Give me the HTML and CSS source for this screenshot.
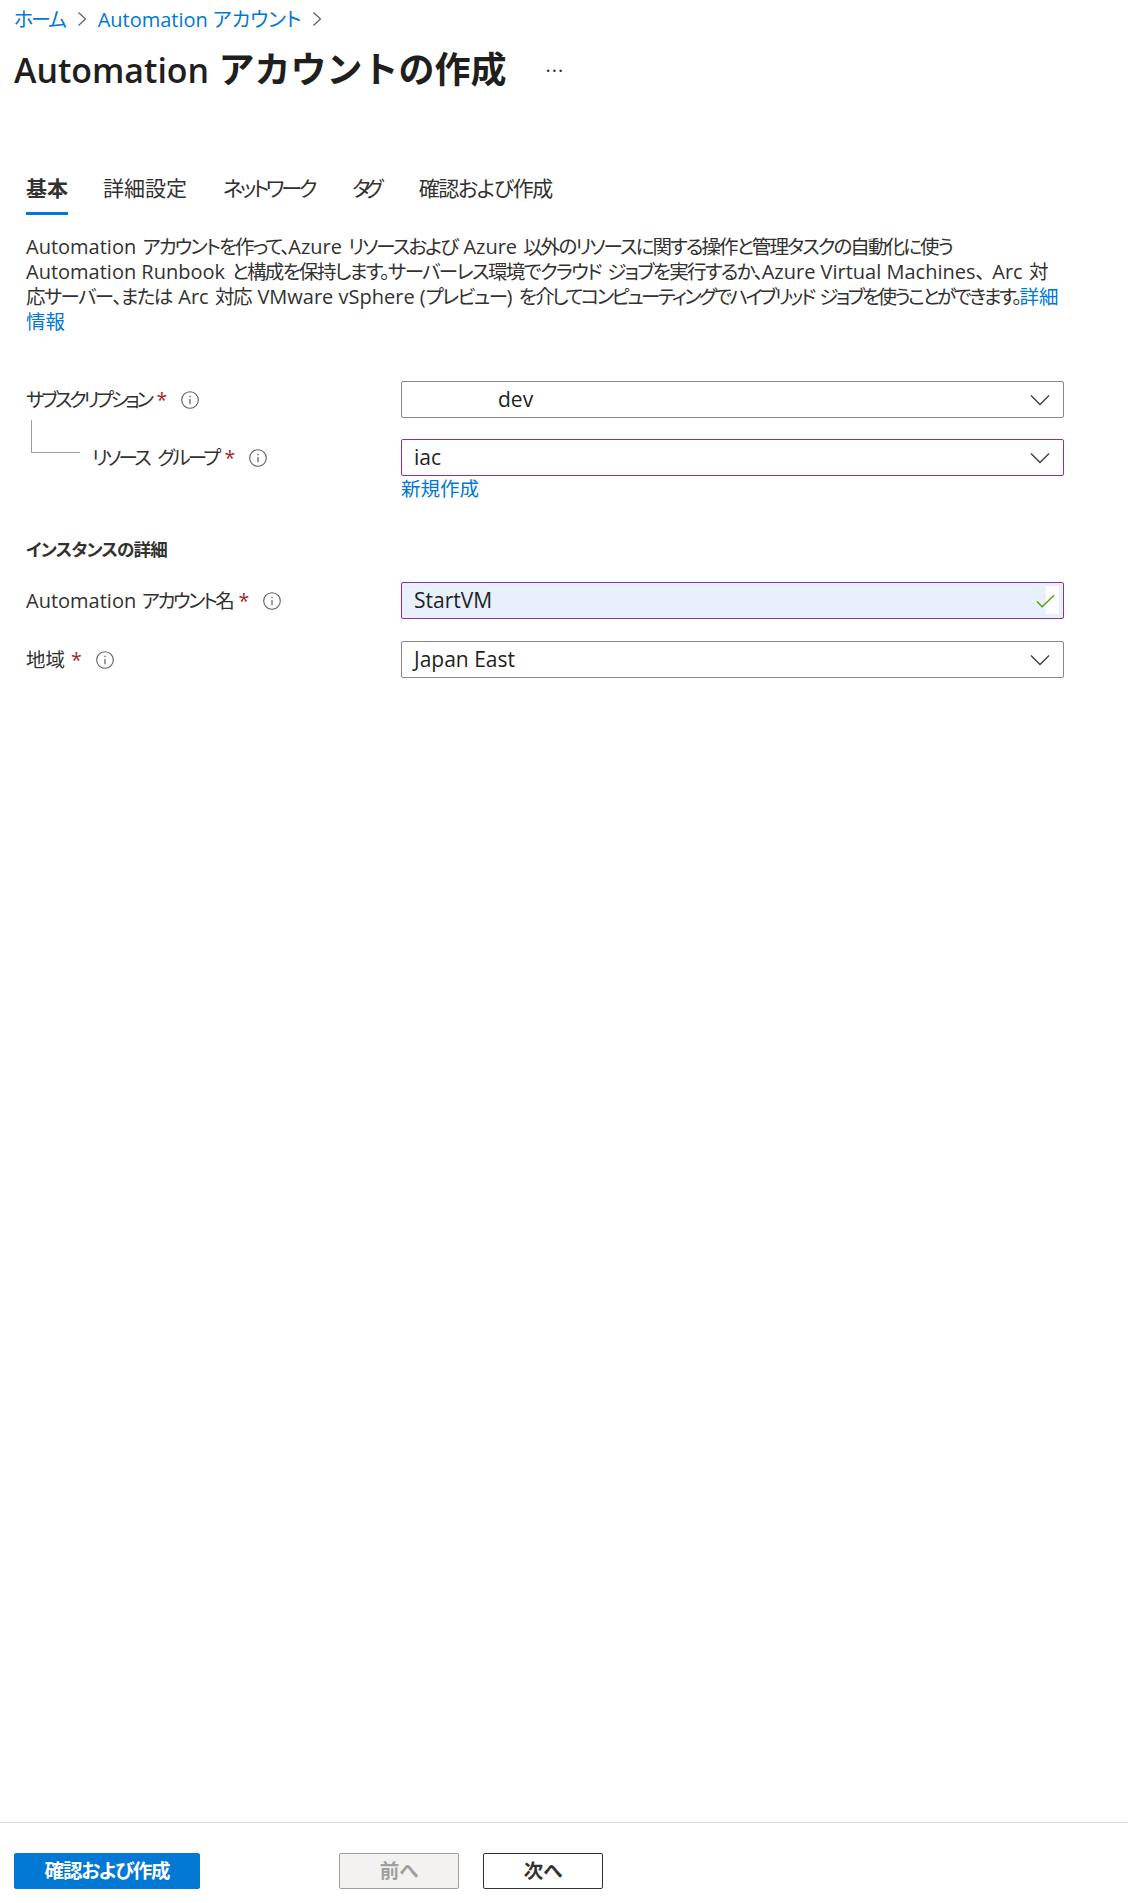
FILE: index.html
```html
<!DOCTYPE html>
<html lang="ja">
<head>
<meta charset="utf-8">
<title>Automation アカウントの作成</title>
<link rel="stylesheet" href="styles.css">
</head>
<body>
<div class="page">
  <nav class="crumbs">
    <a class="crumb-home" href="#">ホーム</a>
    <svg class="crumb-sep" viewBox="0 0 10 16"><path d="M1.5 1.5 8.5 8l-7 6.5"/></svg>
    <a href="#">Automation アカウント</a>
    <svg class="crumb-sep" viewBox="0 0 10 16"><path d="M1.5 1.5 8.5 8l-7 6.5"/></svg>
  </nav>
  <header class="title-row">
    <h1><span class="title-en">Automation</span> アカウントの作成</h1>
    <span class="more">···</span>
  </header>
  <main class="content">
    <div class="tabs">
      <span class="tab active">基本</span>
      <span class="tab">詳細設定</span>
      <span class="tab tab-net">ネットワーク</span>
      <span class="tab tab-tag">タグ</span>
      <span class="tab tab-review">確認および作成</span>
    </div>
    <p class="intro">
      <span class="line line-1"><span class="en">Automation</span> アカウントを作って、<span class="en">Azure</span> リソースおよび <span class="en">Azure</span> 以外のリソースに関する操作と管理タスクの自動化に使う</span>
      <span class="line line-2"><span class="en">Automation Runbook</span> と構成を保持します。サーバーレス環境でクラウド ジョブを実行するか、<span class="en">Azure Virtual Machines</span><span class="comma">、</span><span class="en">Arc</span> 対</span>
      <span class="line line-3">応サーバー、または <span class="en">Arc</span> 対応 <span class="en">VMware vSphere (</span>プレビュー<span class="en">)</span> を<span class="tight">介してコンピューティングでハイブリッド ジョブを使うことができます。</span><a class="en-link" href="#">詳細</a></span>
      <a class="line en-link" href="#">情報</a>
    </p>

    <div class="field first">
      <label class="label label-sub"><span>サブスクリプション</span><span class="req">*</span><svg class="info" viewBox="0 0 18 18"><circle cx="9" cy="9" r="8.3"/><path d="M9 8v5.2M9 4.8v1.4"/></svg></label>
      <div class="control"><span class="value redacted">dev</span><svg class="chev" viewBox="0 0 20 12"><path d="M1 1.5 10 10.5l9-9"/></svg></div>
    </div>
    <div class="field nested">
      <span class="tree"></span>
      <label class="label label-rg"><span>リソース グループ</span><span class="req">*</span><svg class="info" viewBox="0 0 18 18"><circle cx="9" cy="9" r="8.3"/><path d="M9 8v5.2M9 4.8v1.4"/></svg></label>
      <div class="control invalid"><span class="value">iac</span><svg class="chev" viewBox="0 0 20 12"><path d="M1 1.5 10 10.5l9-9"/></svg></div>
    </div>
    <a class="create-new" href="#">新規作成</a>

    <h2>インスタンスの詳細</h2>

    <div class="field">
      <label class="label label-name"><span><span class="en">Automation</span> アカウント名</span><span class="req">*</span><svg class="info" viewBox="0 0 18 18"><circle cx="9" cy="9" r="8.3"/><path d="M9 8v5.2M9 4.8v1.4"/></svg></label>
      <div class="control invalid filled"><span class="value">StartVM</span><span class="check-patch"></span><svg class="check" viewBox="0 0 20 14"><path d="M1 7.5 6.5 13 19 1"/></svg></div>
    </div>
    <div class="field region">
      <label class="label"><span>地域</span><span class="req">*</span><svg class="info" viewBox="0 0 18 18"><circle cx="9" cy="9" r="8.3"/><path d="M9 8v5.2M9 4.8v1.4"/></svg></label>
      <div class="control"><span class="value">Japan East</span><svg class="chev" viewBox="0 0 20 12"><path d="M1 1.5 10 10.5l9-9"/></svg></div>
    </div>
  </main>
  <footer class="footer">
    <button class="btn primary" type="button">確認および作成</button>
    <button class="btn disabled" type="button">前へ</button>
    <button class="btn outline" type="button">次へ</button>
  </footer>
</div>
</body>
</html>
```

FILE: styles.css
```css
* { box-sizing: border-box; }
html, body { margin: 0; padding: 0; background: #fff; }
body {
  font-family: "Open Sans", "Noto Sans CJK JP", sans-serif;
  font-feature-settings: "palt";
  color: #323130;
  font-size: 19.5px;
  line-height: 25px;
}
a { color: #0078d4; text-decoration: none; }
.page { width: 1128px; height: 1903px; display: flex; flex-direction: column; }
.en { font-size: 20px; letter-spacing: 0; word-spacing: 0; }

.crumbs { display: flex; align-items: center; height: 38px; padding-left: 14px; font-size: 20px; }
.crumb-home { letter-spacing: -2.2px; margin-right: 1px; }
.crumb-sep { width: 10px; height: 16px; margin: 0 11px; flex: none; }
.crumb-sep path { fill: none; stroke: #605e5c; stroke-width: 1.2; }

.title-row { display: flex; align-items: center; height: 57px; padding: 7px 0 0 14px; }
h1 { margin: 0; font-size: 36px; line-height: 50px; font-weight: 600; color: #201f1e; font-feature-settings: normal; white-space: nowrap; }
.title-en { font-size: 33.9px; }
.more { margin-left: 39px; font-size: 20px; color: #323130; letter-spacing: 1px; }

.content { flex: 1; padding: 77px 0 0 26px; }

.tabs { display: flex; gap: 35px; height: 43px; }
.tab { font-size: 21px; line-height: 32px; height: 43px; white-space: nowrap; }
.tab.active { font-weight: 700; border-bottom: 3px solid #0078d4; }
.tab-net { letter-spacing: -3.3px; margin-left: 1px; }
.tab-tag { letter-spacing: -6px; margin-left: 3px; }
.tab-review { letter-spacing: -1.35px; margin-left: 6px; }

.intro { margin: 19px 0 0; white-space: nowrap; word-spacing: 3px; }
.line { display: block; }
.line-1 { letter-spacing: -1.9px; }
.line-2 { letter-spacing: -1.65px; }
.line-3 { letter-spacing: -1.6px; }
.tight { letter-spacing: -2.55px; }
.comma { letter-spacing: 7px; }
.en-link { letter-spacing: 0; }

.field { display: flex; align-items: center; height: 37px; position: relative; }
.field.first { margin-top: 47px; }
.field.nested { margin-top: 21px; }
.field.region { margin-top: 22px; }
.label { width: 375px; flex: none; display: flex; align-items: center; white-space: nowrap; }
.nested .label { padding-left: 66px; }
.label-sub > span:first-child { letter-spacing: -3.3px; }
.label-rg > span:first-child { letter-spacing: -2.7px; word-spacing: 6px; }
.label-name > span:first-child { letter-spacing: -2.5px; word-spacing: 3px; }
.req { color: #a4262c; margin-left: 6px; letter-spacing: 0; }
.info { width: 18px; height: 18px; margin-left: 14px; flex: none; }
.info circle { fill: none; stroke: #605e5c; stroke-width: 1.1; }
.info path { fill: none; stroke: #605e5c; stroke-width: 1.2; }
.tree { position: absolute; left: 5px; top: -19px; width: 49px; height: 33px; border-left: 1px solid #a19f9d; border-bottom: 1px solid #a19f9d; }

.control {
  width: 663px; height: 37px; border: 1px solid #8a8886; border-radius: 2px; font-size: 21px;
  display: flex; align-items: center; padding: 0 12px; position: relative; color: #201f1e;
}
.value.redacted { margin-left: 84px; }
.control.invalid { border: 1.5px solid #8c2ea8; }
.control.filled { background: #e8f0fe; }
.chev { position: absolute; right: 13px; top: 12px; width: 20px; height: 12px; }
.chev path { fill: none; stroke: #3b3a39; stroke-width: 1.3; }
.check { position: absolute; right: 8px; top: 11px; width: 19px; height: 14px; z-index: 1; }
.check path { fill: none; stroke: #57a300; stroke-width: 1.6; }
.check-patch { position: absolute; right: 4px; top: 3px; width: 13px; height: 28px; background: #fff; }

.create-new { display: block; margin: 0 0 0 375px; line-height: 25px; }

h2 { margin: 36px 0 0; font-size: 17.5px; line-height: 25px; font-weight: 700; color: #323130; letter-spacing: -0.8px; }
h2 + .field { margin-top: 20px; }

.footer { height: 81px; border-top: 1px solid #e1dfdd; display: flex; padding: 30px 0 0 14px; gap: 24px; }
.btn { height: 36px; border-radius: 2px; font: inherit; font-size: 19.5px; font-weight: 700; line-height: 1; padding: 0; width: 120px; }
.primary { width: 186px; background: #0078d4; color: #fff; border: 1px solid #0078d4; margin-right: 115px; letter-spacing: -1.2px; }
.disabled { background: #f3f2f1; color: #a19f9d; border: 1px solid #a19f9d; }
.outline { background: #fff; color: #323130; border: 1px solid #323130; }
```
